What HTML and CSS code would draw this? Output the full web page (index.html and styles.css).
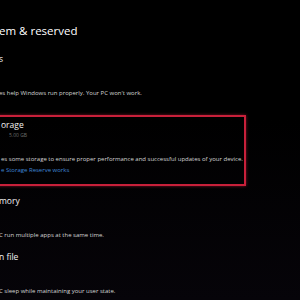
FILE: index.html
```html
<!DOCTYPE html>
<html lang="en">
<head>
    <meta charset="UTF-8">
    <meta name="viewport" content="width=device-width, initial-scale=1.0">
    <title>System &amp; reserved</title>
    <link rel="stylesheet" href="styles.css">
</head>
<body>
    <main class="page">
        <h1 class="title">em &amp; reserved</h1>

        <section class="item first">
            <h2>s</h2>
            <p class="size"></p>
            <p class="desc">es help Windows run properly. Your PC won't work.</p>
        </section>

        <!-- Highlighted item -->
        <section class="item highlight">
            <h2>orage</h2>
            <p class="size">5.00 GB</p>
            <p class="desc">es some storage to ensure proper performance and successful updates of your device.</p>
            <a class="link" href="#">e Storage Reserve works</a>
        </section>

        <section class="item">
            <h2>mory</h2>
            <p class="size"></p>
            <p class="desc">C run multiple apps at the same time.</p>
        </section>

        <section class="item">
            <h2>n file</h2>
            <p class="size"></p>
            <p class="desc">C sleep while maintaining your user state.</p>
        </section>
    </main>
</body>
</html>
```
FILE: styles.css
```css
* {
    margin: 0;
    padding: 0;
    box-sizing: border-box;
}

body {
    font-family: "Open Sans", "Noto Sans", sans-serif;
    background: linear-gradient(#000 0%, #000 40%, #060409 100%);
    color: #fff;
    width: 300px;
    height: 300px;
    overflow: hidden;
}

.page {
    padding-top: 23px;
    margin-left: -1px;
}

.title {
    font-size: 11.5px;
    font-weight: 400;
    line-height: 16px;
    margin-bottom: 14px;
}

.item h2 {
    font-size: 8.5px;
    font-weight: 400;
    line-height: 12px;
    color: #f2f2f2;
}

.size {
    font-size: 5px;
    line-height: 9px;
    height: 9px;
    color: #6e6e6e;
    padding-left: 8px;
}

.desc {
    margin-top: 14px;
    font-size: 6px;
    line-height: 10px;
    color: #d4d4d4;
    white-space: nowrap;
}

.item {
    margin-bottom: 11px;
}

.highlight {
    margin-left: -20px;
    margin-top: 17px;
    margin-bottom: 9px;
    padding: 2px 0 9px 20px;
    width: 267px;
    border: 2px solid #c8203a;
    box-shadow: 0 0 3px rgba(200, 32, 58, 0.6);
}

.link {
    display: block;
    font-size: 6px;
    line-height: 10px;
    color: #3f86d6;
    text-decoration: none;
    margin-top: 1px;
}
```
